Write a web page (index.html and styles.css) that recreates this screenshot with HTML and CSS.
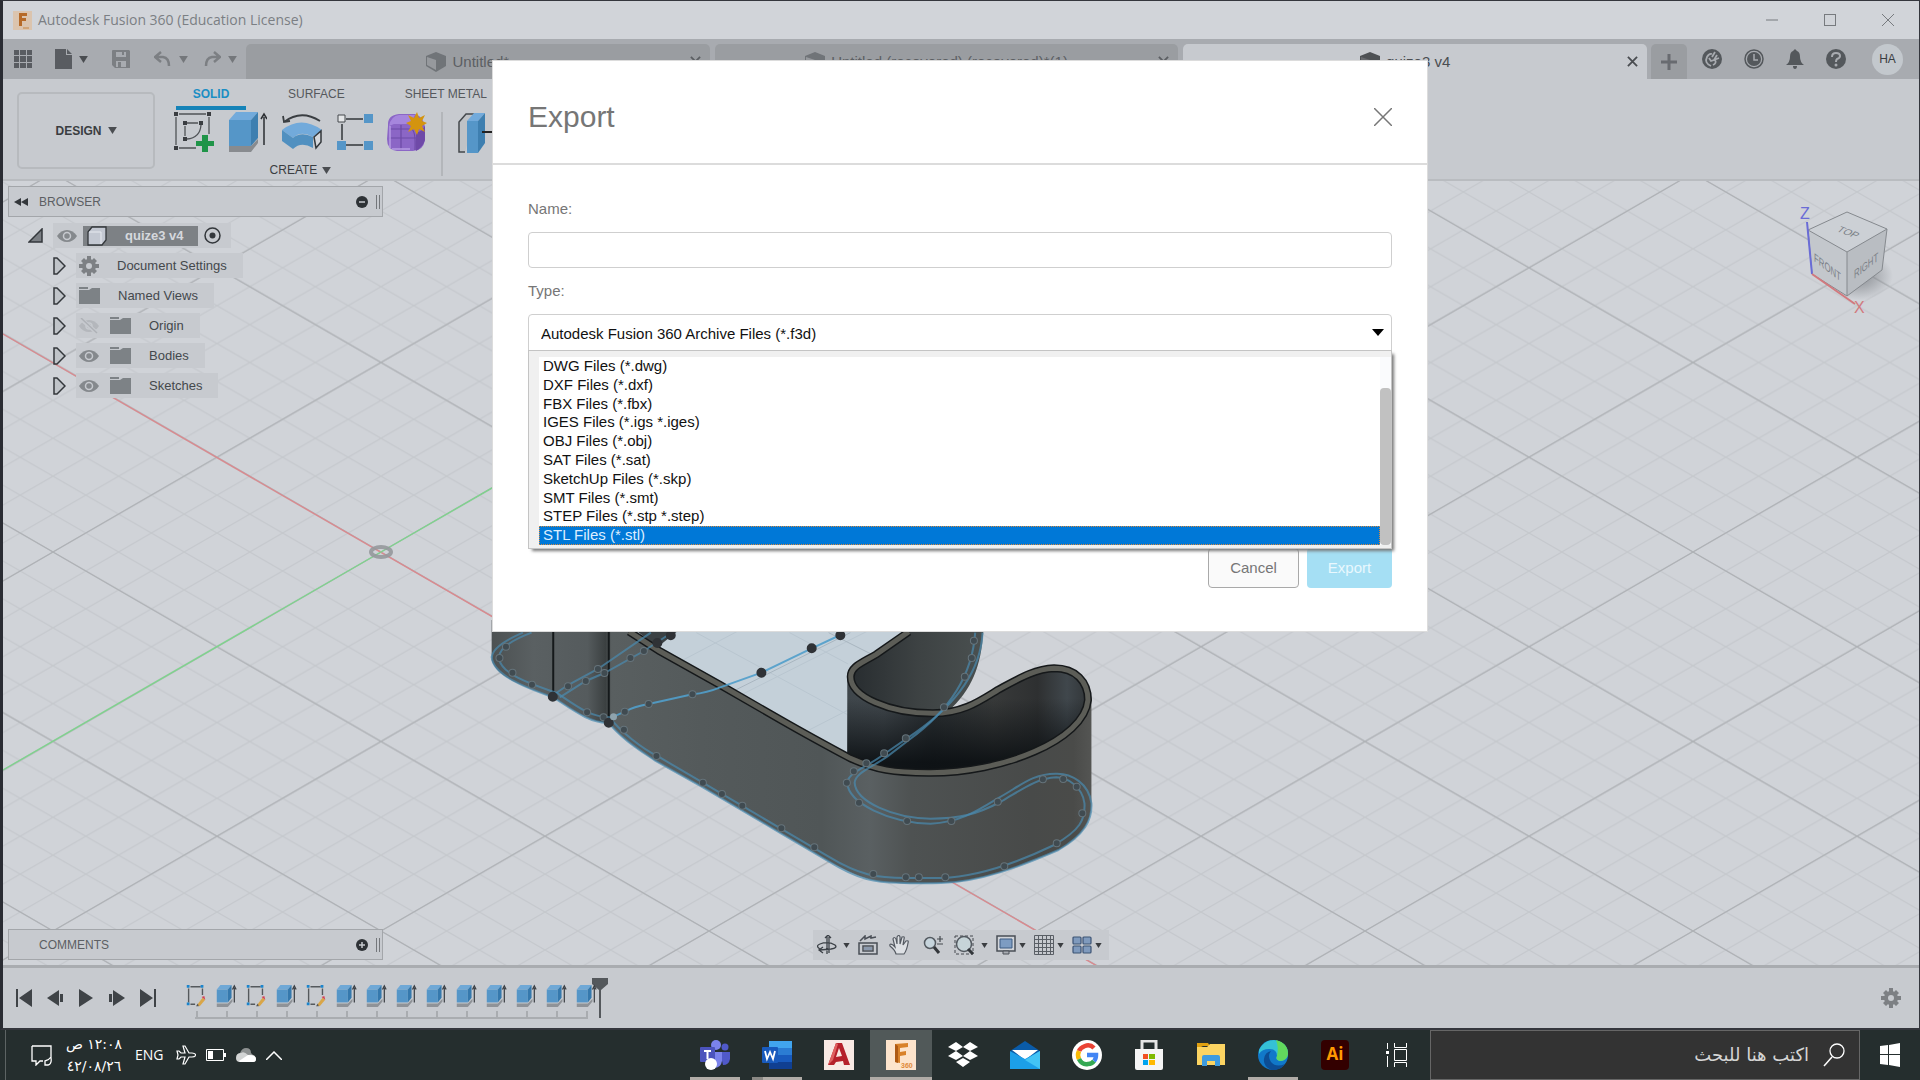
FILE: index.html
```html
<!DOCTYPE html>
<html lang="en">
<head>
<meta charset="utf-8">
<title>Autodesk Fusion 360 (Education License)</title>
<link rel="stylesheet" href="styles.css">
</head>
<body>
<svg class="defs" aria-hidden="true">
  <defs>
    <symbol id="i-caret" viewBox="0 0 10 8"><path d="M0 0H10L5 8Z" fill="currentColor"/></symbol>
    <symbol id="i-cube" viewBox="0 0 20 20"><path d="M0 4L10 0L20 4V14L10 20L0 14Z" fill="#707478"/><path d="M1 5L10 8V18L1 13Z" fill="#96999d"/></symbol>
    <symbol id="i-x" viewBox="0 0 12 12"><path d="M1 1L11 11M11 1L1 11" stroke="currentColor" stroke-width="2" fill="none"/></symbol>
    <symbol id="i-extrude" viewBox="0 0 22 26"><path d="M1 21H13L18 16V19L13 25H1Z" fill="#8f9398"/><path d="M1 6L5 1H17L13 6Z" fill="#6fa8d6"/><path d="M1 6H13V20H1Z" fill="#5596c8"/><path d="M13 6L17 1V15L13 20Z" fill="#3579ad"/><path d="M20 20V4M18 6L20 2L22 6" stroke="#3a3e42" stroke-width="1.300" fill="none"/></symbol>
    <symbol id="i-sketch" viewBox="0 0 22 26"><path d="M5 3H16M3 5V20M18 5V12M5 22H10" stroke="#55595d" stroke-width="1.500" fill="none"/><path d="M1 1H4V4H1ZM16 1H19V4H16ZM1 20H4V23H1Z" fill="#1c85cc"/><path d="M12 23L18 15L21 17L15 24Z" fill="#d9a648"/><path d="M17 14L20 13L21 17Z" fill="#d44456"/><path d="M11 24L13 21L14 24Z" fill="#555"/></symbol>
    <symbol id="i-gear" viewBox="0 0 20 20"><path d="M8 0H12V4H8ZM8 16H12V20H8ZM0 8H4V12H0ZM16 8H20V12H16ZM2 5L5 2L8 5L5 8ZM12 5L15 2L18 5L15 8ZM2 15L5 18L8 15L5 12ZM12 15L15 18L18 15L15 12Z" fill="#7d8084"/><circle cx="10" cy="10" r="5" fill="none" stroke="#7d8084" stroke-width="4"/></symbol>
    <symbol id="i-folder" viewBox="0 0 21 17"><path d="M0 0H9V2H0ZM0 3H10L13 1H21V17H0Z" fill="#7d8286"/></symbol>
    <symbol id="i-eye" viewBox="0 0 20 14"><path d="M0 7C5-1 15-1 20 7C15 15 5 15 0 7Z" fill="#85898d"/><circle cx="10" cy="7" r="3.500" fill="none" stroke="#c7cacf" stroke-width="1.500"/></symbol>
    <symbol id="i-closed-eye" viewBox="0 0 20 16"><path d="M0 8C5 0 15 0 20 8C15 16 5 16 0 8Z" fill="#b4b7bc"/><circle cx="10" cy="8" r="3" fill="none" stroke="#c7cacf" stroke-width="1.500"/><path d="M1 0L19 16" stroke="#c7cacf" stroke-width="4"/><path d="M2 0L18 15" stroke="#aeb1b6" stroke-width="1.500"/></symbol>
    <symbol id="i-expand" viewBox="0 0 13 18"><path d="M1 1H4L12 9L4 17H1Z" fill="#c0c4c9" stroke="#33373b" stroke-width="1.500"/></symbol>
  </defs>
</svg>

<main class="window">
  <header class="titlebar">
    <svg class="app-icon" viewBox="0 0 19 19"><rect width="19" height="19" fill="#dbc4ae"/><path d="M6 2H14V5H9V7H13V10H9V15H6Z" fill="#b66a28"/><path d="M10 16H16V18H10Z" fill="#d1a578"/></svg>
    <h1 class="title">Autodesk Fusion 360 (Education License)</h1>
    <div class="win-controls">
      <button aria-label="Minimize"><svg width="12" height="12" viewBox="0 0 12 12"><path d="M0 6H12" stroke="#777a7e"/></svg></button>
      <button aria-label="Maximize"><svg width="12" height="12" viewBox="0 0 12 12"><rect x=".5" y=".5" width="11" height="11" fill="none" stroke="#777a7e"/></svg></button>
      <button aria-label="Close"><svg width="12" height="12" viewBox="0 0 12 12"><path d="M0 0L12 12M12 0L0 12" stroke="#777a7e"/></svg></button>
    </div>
  </header>

  <nav class="tabbar">
    <div class="quick">
      <button aria-label="Data panel"><svg width="18" height="18" viewBox="0 0 18 18" fill="#595c61"><path d="M0 0H5V5H0ZM6 0H12V5H6ZM13 0H18V5H13ZM0 6H5V12H0ZM6 6H12V12H6ZM13 6H18V12H13ZM0 13H5V18H0ZM6 13H12V18H6ZM13 13H18V18H13Z"/></svg></button>
      <button class="file" aria-label="File"><svg width="17" height="20" viewBox="0 0 17 20"><path d="M0 0H11V6H17V20H0ZM12 0L17 5H12Z" fill="#595c61"/></svg><svg class="caret dark"><use href="#i-caret"/></svg></button>
      <button class="save" aria-label="Save"><svg width="18" height="18" viewBox="0 0 18 18"><path d="M0 1Q0 0 1 0H17L18 1V18H3L0 15Z" fill="#7c7f83"/><path d="M4 2H14V7H4ZM4 11H14V17H4Z" fill="#a8abb0"/><path d="M10 2H12V5H10ZM6 12H9V17H6Z" fill="#7c7f83"/></svg></button>
      <button class="undo" aria-label="Undo"><svg width="17" height="16" viewBox="0 0 17 16"><path d="M7 1L1 6L7 11M1 6H9Q15 7 15 15" fill="none" stroke="#7c7f83" stroke-width="2.500"/></svg><svg class="caret"><use href="#i-caret"/></svg></button>
      <button class="redo" aria-label="Redo"><svg width="17" height="16" viewBox="0 0 17 16"><path d="M10 1L16 6L10 11M16 6H8Q2 7 2 15" fill="none" stroke="#7c7f83" stroke-width="2.500"/></svg><svg class="caret"><use href="#i-caret"/></svg></button>
    </div>
    <div class="tabs">
      <div class="tab"><span class="tab-name"><svg class="cube"><use href="#i-cube"/></svg>Untitled*</span><button aria-label="Close tab"><svg class="x"><use href="#i-x"/></svg></button></div>
      <div class="tab"><span class="tab-name"><svg class="cube"><use href="#i-cube"/></svg>Untitled (recovered) (recovered)*(1)</span><button aria-label="Close tab"><svg class="x"><use href="#i-x"/></svg></button></div>
      <div class="tab active"><span class="tab-name"><svg class="cube"><use href="#i-cube"/></svg>quize3 v4</span><button aria-label="Close tab"><svg class="x"><use href="#i-x"/></svg></button></div>
    </div>
    <button class="new-tab" aria-label="New tab"><svg width="16" height="16" viewBox="0 0 16 16"><path d="M8 0V16M0 8H16" stroke="#686b70" stroke-width="3"/></svg></button>
    <div class="account">
      <button aria-label="Extensions"><svg width="20" height="20" viewBox="0 0 20 20"><circle cx="10" cy="10" r="10" fill="#54585c"/><path d="M9 17Q2 14 5 8Q7 4 10 5M7 9L9 12L12 11L15 6M10 8L13 3M12 11L17 9M13 11Q15 14 11 16" fill="none" stroke="#a8abb0" stroke-width="1.800"/></svg></button>
      <button aria-label="Job status"><svg width="20" height="20" viewBox="0 0 20 20"><circle cx="10" cy="10" r="9" fill="none" stroke="#54585c" stroke-width="1.500"/><circle cx="10" cy="10" r="7" fill="#54585c"/><path d="M10 5V11H14" fill="none" stroke="#a8abb0" stroke-width="1.500"/></svg></button>
      <button aria-label="Notifications"><svg width="18" height="20" viewBox="0 0 18 20"><path d="M9 0L11 2Q14 3 14 8Q14 13 18 16H0Q4 13 4 8Q4 3 7 2ZM7 17H11Q11 20 9 20Q7 20 7 17Z" fill="#54585c"/></svg></button>
      <button aria-label="Help"><svg width="20" height="20" viewBox="0 0 20 20"><circle cx="10" cy="10" r="10" fill="#54585c"/><path d="M6 8Q6 4 10 4Q14 4 14 7Q14 9 11 10Q10 11 10 13" fill="none" stroke="#a8abb0" stroke-width="2"/><circle cx="10" cy="16" r="1.500" fill="#a8abb0"/></svg></button>
      <button class="avatar">HA</button>
    </div>
  </nav>

  <section class="ribbon">
    <button class="workspace">DESIGN <svg class="caret dark"><use href="#i-caret"/></svg></button>
    <div class="tools">
      <div class="ribbon-tabs">
        <button class="selected">SOLID</button>
        <button>SURFACE</button>
        <button>SHEET METAL</button>
      </div>
      <div class="tool-groups">
        <div class="group">
          <div class="tool-icons">
            <svg width="40" height="40" viewBox="0 0 40 40"><path d="M5 2H32M2 5V33M35 5V22M5 36H22M13 11H24M11 14V24M27 13Q26 26 13 27" fill="none" stroke="#505357" stroke-width="1.300"/><path d="M0 0H4V4H0ZM33 0H37V4H33ZM0 34H4V38H0ZM9 9H13V13H9ZM25 9H29V13H25ZM9 25H13V29H9Z" fill="#3a3d41"/><path d="M28 23H34V29H40V34H34V40H28V34H22V29H28Z" fill="#1f9448"/></svg>
            <svg width="39" height="40" viewBox="0 0 39 40"><path d="M1 34H23L30 27V31L23 40H1Z" fill="#888b8f"/><path d="M1 8L8 0H30L23 8Z" fill="#72aadb"/><path d="M1 8H23V34H1Z" fill="#5596c8"/><path d="M23 8L30 0V26L23 34Z" fill="#3e7fb0"/><path d="M36 33V5M33 7L36 2L39 7" fill="none" stroke="#2b2e32" stroke-width="1.500"/></svg>
            <svg width="42" height="38" viewBox="0 0 42 38"><path d="M3 9Q20-4 39 8M2 3L3 9L9 8" fill="none" stroke="#3a3e42" stroke-width="1.800"/><path d="M1 17Q20 2 41 17L32 24Q20 17 12 25Z" fill="#72aadb"/><path d="M1 17L12 25V36L1 28ZM12 25Q20 18 32 24V35Q20 28 12 36Z" fill="#5190c0"/><path d="M33 24L40 18V29L35 35Z" fill="#d5d8dc" stroke="#33373b" stroke-width="1.500"/></svg>
            <svg width="36" height="36" viewBox="0 0 36 36"><path d="M9 5H26M5 10V26M9 31H26" stroke="#33373b" stroke-width="1.500"/><path d="M1 1H8V8H1Z" fill="#e4e6e8" stroke="#45494d"/><path d="M27 0H36V9H27ZM0 27H9V36H0ZM27 27H36V36H27Z" fill="#5596c8"/></svg>
            <svg width="40" height="40" viewBox="0 0 40 40"><path d="M1 14Q0 3 12 2H28Q37 5 38 16V28Q36 40 24 39H10Q0 38 0 27Z" fill="#8b66c6"/><path d="M2 14Q4 4 12 3H28L23 12H7Z" fill="#a686dd"/><path d="M29 21Q37 18 38 13V28Q36 35 29 39Z" fill="#6f4aa8"/><path d="M3 17H24Q29 18 28 38M14 13V38M2 26H29" fill="none" stroke="#6d4aa6" stroke-width="1.200"/><path d="M3 14V36M5 37H23" stroke="#b79ce4" stroke-width="1.500"/><path d="M30 0L32 6L38 3L35 9L40 11L35 14L38 20L32 17L30 23L27 17L21 20L24 14L19 11L24 9L21 3L27 6Z" fill="#d4940f"/></svg>
          </div>
          <button class="group-name">CREATE <svg class="caret dark"><use href="#i-caret"/></svg></button>
        </div>
        <div class="group next">
          <svg width="42" height="40" viewBox="0 0 42 40"><path d="M7 39H1V9L8 1H18" fill="#bfc2c6" stroke="#44484c" stroke-width="1.500"/><path d="M9 8L16 0H27L20 8Z" fill="#72aadb"/><path d="M9 8H20V40H9Z" fill="#5596c8"/><path d="M20 8L27 0V30L20 40Z" fill="#3e7fb0"/><path d="M24 19H40" stroke="#222" stroke-width="2"/></svg>
        </div>
      </div>
    </div>
  </section>

  <section class="viewport">
    <svg class="scene" aria-hidden="true">
      <defs>
        <pattern id="minor" x="378" y="371" width="65.6" height="37.9" patternUnits="userSpaceOnUse"><path d="M-65.600-37.900L131.200 75.800M-65.600 75.800L131.200-37.900" stroke="#c5c8cd" stroke-width="1.200"/></pattern>
        <pattern id="major" x="378" y="371" width="328" height="189.5" patternUnits="userSpaceOnUse"><path d="M-328-189.500L656 379M-328 379L656-189.500" stroke="#aeb1b5" stroke-width="1.200"/></pattern>
        <linearGradient id="wall" gradientUnits="userSpaceOnUse" x1="73" y1="0" x2="1456" y2="0"><stop offset="0" stop-color="#4c5152"/><stop offset=".07" stop-color="#5a6062"/><stop offset=".16" stop-color="#555b5d"/><stop offset=".19" stop-color="#3b4041"/><stop offset=".2" stop-color="#595f60"/><stop offset=".35" stop-color="#545a5b"/><stop offset=".55" stop-color="#505657"/><stop offset=".63" stop-color="#5a6062"/><stop offset=".7" stop-color="#4e5252"/><stop offset=".9" stop-color="#484a49"/><stop offset=".97" stop-color="#4a4b49"/><stop offset="1" stop-color="#545553"/></linearGradient>
        <linearGradient id="inner" x1="0" y1="0" x2="1" y2="0"><stop offset="0" stop-color="#3f464b"/><stop offset=".15" stop-color="#42494e"/><stop offset=".35" stop-color="#2b3033"/><stop offset=".6" stop-color="#383a3a"/><stop offset=".78" stop-color="#2e3031"/><stop offset=".9" stop-color="#40474c"/><stop offset="1" stop-color="#2f3335"/></linearGradient>
        <linearGradient id="fade" x1="0" y1="0" x2="0" y2="1"><stop offset=".3" stop-color="#0b0f12" stop-opacity="0"/><stop offset=".9" stop-color="#0b0f12" stop-opacity=".9"/></linearGradient>
        <linearGradient id="far" x1="0" y1="0" x2="1" y2="0"><stop offset="0" stop-color="#282d30"/><stop offset=".5" stop-color="#3d4243"/><stop offset="1" stop-color="#4a5050"/></linearGradient>
        <radialGradient id="shade"><stop offset="0" stop-color="#777b80" stop-opacity=".8"/><stop offset="1" stop-color="#777b80" stop-opacity="0"/></radialGradient>
      </defs>
      <rect width="100%" height="100%" fill="url(#minor)"/>
      <rect width="100%" height="100%" fill="url(#major)"/>
      <path d="M0 153L1378 949" stroke="#d98a8f" stroke-width="1.400"/>
      <path d="M0 589L378 371L600 243" stroke="#7fd38d" stroke-width="1.400"/>
      <ellipse cx="378" cy="371" rx="10" ry="5" fill="none" stroke="#95989c" stroke-width="4" stroke-opacity=".9"/>

      <svg class="body" x="457" y="419" width="680" height="300" viewBox="0 0 1568 900" preserveAspectRatio="none">
        <path d="M380 80H1060L960 170L895 230V475L740 365L600 255Z" fill="#c4d0d9"/>
        <path d="M545 98L895 345M760 98L895 192M640 290L960 80M500 190L660 80M790 400L895 330" stroke="#b9c6d0" stroke-width="1"/>
        <path d="M620 280L900 98M850 98L960 170" stroke="#a9b6c0" stroke-width="1"/>
        <path d="M1040 90H1207C1202 200 1180 270 1125 335L1090 342C980 340 905 280 905 230C905 190 960 180 1040 90Z" fill="url(#far)"/>
        <path d="M893 230C900 295 990 345 1090 345C1160 345 1210 295 1260 255C1310 215 1340 200 1375 200C1430 202 1456 250 1456 300C1450 420 1250 525 1080 518C1000 520 940 500 893 468Z" fill="url(#inner)"/>
        <path d="M893 230C900 295 990 345 1090 345C1160 345 1210 295 1260 255C1310 215 1340 200 1375 200C1430 202 1456 250 1456 300C1450 420 1250 525 1080 518C1000 520 940 500 893 468Z" fill="url(#fade)"/>
        <path d="M73 60V180C85 235 155 262 215 292C255 325 300 370 343 368C370 415 420 455 450 482L560 562L740 700L850 784C920 835 960 848 1000 848C1040 852 1080 850 1110 849C1200 846 1290 800 1380 750C1440 705 1458 660 1456 600V290C1450 430 1250 525 1080 521C1000 520 960 515 895 475C850 450 780 390 740 362L600 262L460 160L350 60Z" fill="url(#wall)"/>
        <path d="M405 90L500 95L455 142Z" fill="#3b4144"/>
        <g class="rim">
          <path d="M390 95L460 153L600 255L740 360C800 405 850 440 900 475C960 510 1000 518 1080 518C1250 520 1440 420 1448 300C1448 245 1420 205 1370 205C1325 207 1290 235 1240 270C1200 302 1160 340 1090 340C990 340 901 290 901 230C901 200 925 190 960 163L1035 95"/>
          <path class="rim-top" d="M390 95L460 153L600 255L740 360C800 405 850 440 900 475C960 510 1000 518 1080 518C1250 520 1440 420 1448 300C1448 245 1420 205 1370 205C1325 207 1290 235 1240 270C1200 302 1160 340 1090 340C990 340 901 290 901 230C901 200 925 190 960 163L1035 95"/>
        </g>
        <path class="edge" d="M215 90V292M343 90V368"/>
        <g class="sketch">
          <path d="M73 170C75 225 150 262 215 292C255 325 300 372 343 368C370 415 420 455 450 482L560 562L740 700L850 784C920 840 960 848 1010 848C1040 850 1080 850 1110 849C1200 846 1290 800 1380 750C1440 705 1458 660 1456 610C1450 550 1410 520 1375 521C1320 520 1290 560 1240 595C1190 635 1150 668 1085 671C990 668 895 610 893 548C896 515 940 500 975 465L1050 398C1130 325 1200 230 1205 98"/>
          <path d="M165 98C110 125 88 150 90 175C95 225 170 255 225 280C270 320 300 350 345 352C370 395 420 445 455 468L560 548L740 686L850 770C920 825 960 834 1030 834H1110C1200 830 1290 785 1370 735C1430 690 1442 660 1440 610C1435 560 1400 532 1375 532C1330 535 1300 565 1250 603C1190 645 1150 656 1085 656C1000 655 912 605 910 548C912 520 945 505 985 470L1035 420C1110 350 1180 250 1188 98"/>
          <path d="M145 98C105 120 75 145 73 172M215 285L249 255L318 207L440 98M230 292L290 243L333 219L424 153L480 105"/>
          <path class="bright" d="M350 352L380 335Q400 320 435 312L536 283Q570 278 600 262L695 218L811 145L877 105"/>
        </g>
        <path class="dots halo" d="M106 140h0M91 174h0M121 218h0M166 254h0M249 259h0M290 243h0M333 219h0M318 207h0M393 174h0M424 153h0M293 337h0M331 352h0M380 335h0M435 312h0M536 283h0M378 389h0M453 468h0M560 548h0M604 582h0M651 617h0M741 685h0M817 742h0M953 822h0M1028 832h0M1058 832h0M1119 832h0M1255 799h0M1376 730h0M1435 640h0M1422 560h0M1391 537h0M1344 538h0M1240 605h0M1133 663h0M1031 663h0M920 608h0M892 548h0M908 514h0M937 490h0M978 460h0M1028 415h0M1116 322h0M1164 230h0M1180 174h0M1185 122h0"/>
        <path class="dots" d="M106 140h0M91 174h0M121 218h0M166 254h0M249 259h0M290 243h0M333 219h0M318 207h0M393 174h0M424 153h0M293 337h0M331 352h0M380 335h0M435 312h0M536 283h0M378 389h0M453 468h0M560 548h0M604 582h0M651 617h0M741 685h0M817 742h0M953 822h0M1028 832h0M1058 832h0M1119 832h0M1255 799h0M1376 730h0M1435 640h0M1422 560h0M1391 537h0M1344 538h0M1240 605h0M1133 663h0M1031 663h0M920 608h0M892 548h0M908 514h0M937 490h0M978 460h0M1028 415h0M1116 322h0M1164 230h0M1180 174h0M1185 122h0"/>
        <path class="dots strong" d="M214 290h0M343 368h0M455 129h0M486 106h0M695 218h0M811 145h0M877 106h0"/>
        <path class="dots pale" d="M354 350h0"/>
      </svg>

      <g class="viewcube">
        <ellipse cx="1856" cy="95" rx="34" ry="24" fill="url(#shade)"/>
        <path d="M1805 49L1844 31L1884 48L1844 71Z" fill="#ccd0d5"/><path d="M1805 49L1844 71V115L1809 93Z" fill="#c3c7cc"/><path d="M1884 48L1844 71V115L1879 89Z" fill="#b9bdc2"/>
        <path d="M1805 49L1844 31L1884 48L1844 71ZL1809 93L1844 115L1879 89L1884 48M1844 71V115" fill="none" stroke="#85898e"/>
        <path d="M1804 41L1809 93" stroke="#6a6cd6" stroke-width="2"/><path d="M1809 93L1852 123" stroke="#d2797e" stroke-width="2"/>
        <text x="1797" y="38" fill="#6a6cd6">Z</text><text x="1851" y="132" fill="#d2797e">X</text>
        <text class="face" transform="matrix(.8 .3 -.6 .6 1833 50)">TOP</text>
        <text class="face" transform="matrix(.65 .5 0 1 1811 80)">FRONT</text>
        <text class="face" transform="matrix(.65 -.5 0 1 1851 98)">RIGHT</text>
      </g>
    </svg>

    <aside class="browser">
      <header class="panel-head"><svg width="14" height="8" viewBox="0 0 14 8"><path d="M7 0V8L0 4ZM14 0V8L7 4Z" fill="#33373b"/></svg><h2>BROWSER</h2><button aria-label="Collapse browser"><svg width="12" height="12" viewBox="0 0 12 12"><circle cx="6" cy="6" r="6" fill="#2e3236"/><path d="M3 6H9" stroke="#c7cacf" stroke-width="1.500"/></svg></button><i class="grip"></i></header>
      <ul class="tree">
        <li class="root"><svg width="15" height="15" viewBox="0 0 15 15"><path d="M1 14H14V1Z" fill="#7b7f84" stroke="#33373b" stroke-width="1.500"/></svg><span class="node"><svg class="eye"><use href="#i-eye"/></svg><b class="component"><svg width="20" height="20" viewBox="0 0 20 20"><path d="M1 6L5 1H19V14L15 19H1Z" fill="#c3c8d2" stroke="#33373b" stroke-width="1.300"/><path d="M2 6H14V18" fill="none" stroke="#e7eaf0"/></svg>quize3 v4</b><svg width="17" height="17" viewBox="0 0 17 17"><circle cx="8.500" cy="8.500" r="7.500" fill="none" stroke="#33373b" stroke-width="1.500"/><circle cx="8.500" cy="8.500" r="3" fill="#33373b"/></svg></span></li>
        <li><svg class="expand"><use href="#i-expand"/></svg><span class="node"><svg class="gear"><use href="#i-gear"/></svg><span class="label">Document Settings</span></span></li>
        <li><svg class="expand"><use href="#i-expand"/></svg><span class="node"><svg class="folder"><use href="#i-folder"/></svg><span class="label">Named Views</span></span></li>
        <li><svg class="expand"><use href="#i-expand"/></svg><span class="node"><svg class="eye"><use href="#i-closed-eye"/></svg><svg class="folder"><use href="#i-folder"/></svg><span class="label">Origin</span></span></li>
        <li><svg class="expand"><use href="#i-expand"/></svg><span class="node"><svg class="eye"><use href="#i-eye"/></svg><svg class="folder"><use href="#i-folder"/></svg><span class="label">Bodies</span></span></li>
        <li><svg class="expand"><use href="#i-expand"/></svg><span class="node"><svg class="eye"><use href="#i-eye"/></svg><svg class="folder"><use href="#i-folder"/></svg><span class="label">Sketches</span></span></li>
      </ul>
    </aside>

    <header class="panel-head comments"><h2>COMMENTS</h2><button aria-label="Add comment"><svg width="12" height="12" viewBox="0 0 12 12"><circle cx="6" cy="6" r="6" fill="#2e3236"/><path d="M3 6H9M6 3V9" stroke="#c7cacf" stroke-width="1.500"/></svg></button><i class="grip"></i></header>

    <div class="navbar" role="toolbar" aria-label="Navigation">
      <button class="wide" aria-label="Orbit"><svg width="20" height="20" viewBox="0 0 20 20"><path d="M10 1V19M12 2V18M8 3L11 0L14 3M3 14Q-2 11 3 9Q11 6 18 10Q21 13 14 14L3 15M6 12L2 15L6 18" fill="none" stroke="#3c4147" stroke-width="1.300"/></svg><svg class="caret small"><use href="#i-caret"/></svg></button>
      <button aria-label="Look at"><svg width="20" height="20" viewBox="0 0 20 20"><path d="M1 8H19V19H1ZM5 11H15V16H5ZM2 6L7 1V4L13 1V3L18 2" fill="none" stroke="#4a4f57" stroke-width="1.500"/><path d="M6 12H14V15H6Z" fill="#8b99ad"/></svg></button>
      <button class="plain" aria-label="Pan"><svg width="20" height="20" viewBox="0 0 20 20"><path d="M7 19Q6 15 1 11Q0 8 4 10L6 12L4 4Q5 1 7 4L8 9V2Q10-1 11 2V9L13 2Q16 1 15 4L14 10L17 6Q20 5 19 8Q18 15 15 19Z" fill="#dde0e4" stroke="#555a62" stroke-width="1.200"/></svg></button>
      <button class="plain" aria-label="Zoom"><svg width="20" height="20" viewBox="0 0 20 20"><circle cx="7" cy="8" r="5.500" fill="#c6d4dc" stroke="#535960" stroke-width="1.500"/><path d="M11 12L16 18" stroke="#33373b" stroke-width="3"/><path d="M14 4H20M17 1V7M14 9H20" stroke="#44494f" stroke-width="1.200"/></svg></button>
      <button class="wide" aria-label="Fit"><svg width="21" height="20" viewBox="0 0 21 20"><path d="M1 1H19V19H1Z" fill="none" stroke="#44494f" stroke-dasharray="3 2"/><circle cx="10" cy="9" r="7.500" fill="#c6d4d8" stroke="#535960" stroke-width="1.500"/><path d="M14 14L19 19" stroke="#33373b" stroke-width="3"/></svg><svg class="caret small"><use href="#i-caret"/></svg></button>
      <button aria-label="Display settings"><svg width="20" height="20" viewBox="0 0 20 20"><path d="M1 1H19V16H1Z" fill="#d1d4d9" stroke="#4a4f57" stroke-width="1.500"/><path d="M4 4H16V13H4Z" fill="#7d9cc2" stroke="#3f5d83"/><path d="M7 16H13V19H7Z" fill="#a9adb3" stroke="#4a4f57"/></svg><svg class="caret small"><use href="#i-caret"/></svg></button>
      <button aria-label="Grid and snaps"><svg width="20" height="20" viewBox="0 0 20 20"><path d="M.5 .5H19.500V19.500H.5ZM4.500 0V20M8.500 0V20M12.500 0V20M16.500 0V20M0 4.500H20M0 8.500H20M0 12.500H20M0 16.500H20" fill="none" stroke="#5a5f66"/></svg><svg class="caret small"><use href="#i-caret"/></svg></button>
      <button aria-label="Viewports"><svg width="20" height="18" viewBox="0 0 20 18"><g fill="#7f9abd" stroke="#3d5475" stroke-width="1.200"><rect x="1" y="1" width="8" height="7" rx="1"/><rect x="11" y="1" width="8" height="7" rx="1"/><rect x="1" y="10" width="8" height="7" rx="1"/><rect x="11" y="10" width="8" height="7" rx="1"/></g></svg><svg class="caret small"><use href="#i-caret"/></svg></button>
    </div>
  </section>

  <footer class="timeline">
    <div class="playback">
      <button aria-label="To start"><svg width="16" height="18" viewBox="0 0 16 18"><path d="M0 0H2V18H0ZM16 0V18L3 9Z"/></svg></button>
      <button aria-label="Step back"><svg width="16" height="18" viewBox="0 0 16 18"><path d="M12 1V17L0 9ZM13 5H16V13H13Z"/></svg></button>
      <button aria-label="Play"><svg width="16" height="18" viewBox="0 0 16 18"><path d="M1 0L15 9L1 18Z"/></svg></button>
      <button aria-label="Step forward"><svg width="16" height="18" viewBox="0 0 16 18"><path d="M4 1V17L16 9ZM0 5H3V13H0Z"/></svg></button>
      <button aria-label="To end"><svg width="16" height="18" viewBox="0 0 16 18"><path d="M14 0H16V18H14ZM0 0V18L13 9Z"/></svg></button>
    </div>
    <ol class="features">
      <li><svg><use href="#i-sketch"/></svg></li><li><svg><use href="#i-extrude"/></svg></li><li><svg><use href="#i-sketch"/></svg></li><li><svg><use href="#i-extrude"/></svg></li><li><svg><use href="#i-sketch"/></svg></li><li><svg><use href="#i-extrude"/></svg></li><li><svg><use href="#i-extrude"/></svg></li><li><svg><use href="#i-extrude"/></svg></li><li><svg><use href="#i-extrude"/></svg></li><li><svg><use href="#i-extrude"/></svg></li><li><svg><use href="#i-extrude"/></svg></li><li><svg><use href="#i-extrude"/></svg></li><li><svg><use href="#i-extrude"/></svg></li><li><svg><use href="#i-extrude"/></svg></li>
    </ol>
    <svg class="marker" width="16" height="40" viewBox="0 0 16 40"><path d="M0 0H16V6L9 12V40H7V12L0 6Z" fill="#54585c"/></svg>
    <button class="settings" aria-label="Timeline settings"><svg class="gear"><use href="#i-gear"/></svg></button>
  </footer>
</main>

<div class="overlay">
  <section class="dialog" role="dialog" aria-labelledby="dialog-title">
    <header class="dialog-head">
      <h2 id="dialog-title">Export</h2>
      <button aria-label="Close dialog"><svg width="18" height="18" viewBox="0 0 18 18"><path d="M0 0L18 18M18 0L0 18" stroke="#777" stroke-width="1.500"/></svg></button>
    </header>
    <form class="fields">
      <label for="name">Name:</label>
      <input id="name" type="text">
      <label for="type">Type:</label>
      <div class="combo">
        <select id="type"><option>Autodesk Fusion 360 Archive Files (*.f3d)</option></select>
        <svg class="combo-arrow" viewBox="0 0 12 7"><path d="M0 0H12L6 7Z"/></svg>
        <div class="popup">
          <ul class="options" role="listbox" aria-label="File type">
            <li role="option">DWG Files (*.dwg)</li>
            <li role="option">DXF Files (*.dxf)</li>
            <li role="option">FBX Files (*.fbx)</li>
            <li role="option">IGES Files (*.igs *.iges)</li>
            <li role="option">OBJ Files (*.obj)</li>
            <li role="option">SAT Files (*.sat)</li>
            <li role="option">SketchUp Files (*.skp)</li>
            <li role="option">SMT Files (*.smt)</li>
            <li role="option">STEP Files (*.stp *.step)</li>
            <li role="option" class="current" aria-selected="true">STL Files (*.stl)</li>
          </ul>
          <div class="scroll"><i></i></div>
        </div>
      </div>
      <div class="actions">
        <button type="button" class="cancel">Cancel</button>
        <button type="button" class="export" disabled>Export</button>
      </div>
    </form>
  </section>
</div>

<footer class="taskbar">
  <div class="tray">
    <svg width="22" height="22" viewBox="0 0 22 22"><path d="M1 2H20V14M1 2V17H5V21L9 17H12M20 13Q18 16 14 17V21H17Q21 20 20 14" fill="none" stroke="#fff" stroke-width="1.300"/></svg>
    <div class="clock" dir="rtl"><span>١٢:٠٨ ص</span><span>٤٢/٠٨/٢٦</span></div>
    <span class="lang">ENG</span>
    <svg width="20" height="20" viewBox="0 0 20 20"><path d="M20 10Q19 8 16 8H13L9 1H7L9 8H5L3 6H1L2 10L1 14H3L5 12H9L7 19H9L13 12H16Q19 12 20 10Z" fill="none" stroke="#fff" stroke-width="1.200"/></svg>
    <svg width="20" height="12" viewBox="0 0 20 12"><path d="M.5 .5H17.500V11.500H.5Z" fill="none" stroke="#fff"/><path d="M2 2H7V10H2ZM18 4H20V8H18Z" fill="#fff"/></svg>
    <svg width="20" height="14" viewBox="0 0 20 14"><path d="M4 5Q6 0 10 0Q15 0 15 5L19 9H2Z" fill="#8d9191"/><path d="M0 10Q0 5 5 5Q8 3 12 7Q20 6 20 11Q20 14 17 14H4Q0 14 0 10Z" fill="#d2d4d4"/><path d="M3 13L12 7Q20 7 20 11Q20 14 17 14H4Z" fill="#fff"/></svg>
    <svg width="16" height="9" viewBox="0 0 16 9"><path d="M0 9L8 1L16 9" fill="none" stroke="#fff" stroke-width="1.500"/></svg>
  </div>
  <div class="apps">
    <button class="run" aria-label="Teams"><svg viewBox="0 0 30 30"><circle cx="16" cy="5" r="5" fill="#7b83eb"/><circle cx="25" cy="7" r="3.500" fill="#5059c9"/><path d="M20 12H30V19Q29 25 23 25Z" fill="#5059c9"/><path d="M9 12H22V21Q21 28 14 28Q9 27 9 22Z" fill="#7b83eb"/><rect y="7" width="15" height="15" rx="1" fill="#4b53bc"/><path d="M4 11H11M7.500 11V19" stroke="#fff" stroke-width="2"/><circle cx="11" cy="24" r="6" fill="#fff"/></svg></button>
    <button class="run two" aria-label="Word"><svg viewBox="0 0 30 30"><path d="M7 1H30V8H7Z" fill="#41a5ee"/><path d="M7 8H30V15H7Z" fill="#2b7cd3"/><path d="M7 15H30V22H7Z" fill="#185abd"/><path d="M7 22H30V29H7Z" fill="#103f91"/><rect y="7" width="16" height="16" rx="1" fill="#185abd"/><path d="M3 11L5 19L8 12L11 19L13 11" fill="none" stroke="#fff" stroke-width="1.800"/></svg></button>
    <button aria-label="AutoCAD"><svg viewBox="0 0 30 30"><path d="M0 0H30V30H0Z" fill="#f8e9e4"/><path d="M4 25L12 3H18L26 25H20L19 21L12 22L10 25ZM15 8L12 17L18 16Z" fill="#b5202b"/><path d="M4 25L12 3L14 4L9 20Z" fill="#df6060"/></svg></button>
    <button class="run focus" aria-label="Fusion 360"><svg viewBox="0 0 30 30"><path d="M0 0H30V30H0Z" fill="#fde4cc"/><path d="M9 4L22 3V7L14 8V12L20 11V15L14 16V23L9 22Z" fill="#d9822a"/><path d="M9 4L12 6V23L9 22Z" fill="#ae5913"/><text x="15" y="28" class="tiny">360</text></svg></button>
    <button aria-label="Dropbox"><svg viewBox="0 0 30 30"><path d="M8 2L15 7L8 11L0 7ZM22 2L30 7L22 11L15 7ZM8 11L15 16L8 20L0 16ZM22 11L30 16L22 20L15 16ZM15 18L22 22L15 27L8 22Z" fill="#fff"/></svg></button>
    <button aria-label="Mail"><svg viewBox="0 0 30 30"><path d="M0 11L15 1L30 11L15 22Z" fill="#0a5ba8"/><path d="M2 10H28L15 20Z" fill="#fff"/><path d="M0 11L15 19L30 11V29H0Z" fill="#1c9fe8"/><path d="M30 11L15 20L30 29Z" fill="#43c4f5"/></svg></button>
    <button aria-label="Google"><svg viewBox="0 0 30 30"><circle cx="15" cy="15" r="15" fill="#fff"/><g fill="none" stroke-width="4.500"><path d="M22 8Q18 4 13 6Q8 8 7 11" stroke="#ea4335"/><path d="M7 11Q5 15 7 19" stroke="#fbbc05"/><path d="M7 19Q10 25 16 24Q20 24 22 21" stroke="#34a853"/><path d="M22 21Q24 19 24 15H15" stroke="#4285f4"/></g></svg></button>
    <button aria-label="Store"><svg viewBox="0 0 30 30"><path d="M8 10V1H22V10" fill="none" stroke="#e6e6e6" stroke-width="3"/><path d="M1 9H29V28Q29 30 27 30H3Q1 30 1 28Z" fill="#f5f5f5"/><path d="M9 14H14V19H9Z" fill="#f25022"/><path d="M15 14H21V19H15Z" fill="#7fba00"/><path d="M9 20H14V25H9Z" fill="#00a4ef"/><path d="M15 20H21V25H15Z" fill="#ffb900"/></svg></button>
    <button aria-label="File Explorer"><svg viewBox="0 0 30 30"><path d="M1 3H12L14 6H7L1 9Z" fill="#e0a010"/><path d="M1 7H11L14 4H29V25H1Z" fill="#fcd462"/><path d="M6 26V17Q6 15 8 15H22Q24 15 24 17V26H19V21H11V26Z" fill="#3e9bdf"/></svg></button>
    <button class="run" aria-label="Edge"><svg viewBox="0 0 30 30"><circle cx="15" cy="15" r="15" fill="#1178c9"/><path d="M1 10Q6 0 16 0Q30 2 30 14Q29 21 22 21Q17 20 19 16Q19 9 11 9Q4 9 1 14Z" fill="#35c1d6"/><path d="M18 0Q30 3 30 14Q29 21 22 21Q17 20 19 16Q21 8 18 0Z" fill="#62d95d"/><path d="M13 11Q9 16 13 22Q18 28 27 24Q22 31 13 30Q5 26 6 19Q7 12 13 11Z" fill="#0c4d95"/></svg></button>
    <button aria-label="Illustrator"><span class="ai">Ai</span></button>
    <button aria-label="Task view"><svg class="taskview" viewBox="0 0 22 24"><path d="M1.500 0V6M1.500 13V24M8.500 0V4.500H20.500V0M8.500 6.500H20.500V17.500H8.500ZM8.500 24V19.500H20.500V24" fill="none" stroke="#fff"/><path d="M0 8H3V11H0Z" fill="#fff"/></svg></button>
  </div>
  <label class="search" dir="rtl">
    <svg width="22" height="24" viewBox="0 0 22 24"><circle cx="14" cy="8" r="7" fill="none" stroke="#fff" stroke-width="1.300"/><path d="M9 14L1 23" stroke="#fff" stroke-width="1.500"/></svg>
    <input type="text" placeholder="اكتب هنا للبحث" aria-label="اكتب هنا للبحث">
  </label>
  <button class="start" aria-label="Start"><svg width="20" height="24" viewBox="0 0 20 24"><path d="M0 3L8 2V11H0ZM9 2L20 0V11H9ZM0 12H8V22L0 21ZM9 12H20V24L9 22Z" fill="#fff"/></svg></button>
</footer>
</body>
</html>
```
FILE: styles.css
```css
* { box-sizing: border-box; }

body {
  margin: 0;
  height: 100vh;
  display: flex;
  flex-direction: column;
  overflow: hidden;
  background: #14181a;
  color: #3a3d41;
  font: 12px/16px "Liberation Sans", Arial, sans-serif;
}

h1, h2, ul, ol { margin: 0; padding: 0; font-size: inherit; font-weight: normal; list-style: none; }
button { display: flex; align-items: center; padding: 0; border: 0; background: none; color: inherit; font: inherit; }
svg { flex: none; display: block; }
.defs { position: absolute; width: 0; height: 0; }

.window {
  flex: 1;
  min-height: 0;
  display: flex;
  flex-direction: column;
  border: 1px solid #34363d;
  border-left: 3px solid #2a2c33;
  border-bottom-width: 2px;
  background: #c7cacf;
}

/* Title bar */
.titlebar { display: flex; align-items: center; height: 38px; padding: 0 2px 0 10px; background: #d1d4d9; }
.app-icon { width: 19px; height: 19px; }
.title { flex: 1; margin-left: 6px; color: #7b7f84; font: 14px/20px "Open Sans", "Noto Sans", sans-serif; }
.win-controls { display: flex; }
.win-controls button { width: 58px; height: 38px; justify-content: center; }

/* Document tabs */
.tabbar { display: flex; height: 40px; background: #a8abb0; }
.quick { display: flex; align-items: center; width: 243px; padding-left: 11px; }
.file { margin-left: 23px; gap: 7px; }
.save { margin-left: 24px; }
.undo { margin-left: 24px; gap: 8px; }
.redo { margin-left: 16px; gap: 7px; }
.caret { width: 9px; height: 7px; color: #74777b; }
.caret.dark { color: #4a4d51; }
.caret.small { width: 7px; height: 5px; color: #3a3d41; }
.tabs { flex: 1; display: flex; gap: 5px; padding-top: 5px; }
.tab { flex: 1; display: flex; align-items: center; padding-right: 9px; border-radius: 5px 5px 0 0; background: #9a9da1; color: #5c5f63; font-size: 15px; }
.tab-name { flex: 1; display: flex; align-items: center; justify-content: center; gap: 6px; }
.tab.active { background: #c7cacf; color: #4a4d51; }
.cube { width: 20px; height: 20px; }
.active .cube { filter: brightness(.7); }
.x { width: 11px; height: 11px; }
.new-tab { width: 36px; margin: 5px 0 0 4px; justify-content: center; border-radius: 5px 5px 0 0; background: #9a9da1; }
.account { display: flex; align-items: center; gap: 22px; width: 232px; padding-left: 15px; }
.avatar { width: 31px; height: 31px; margin-left: 4px; justify-content: center; border-radius: 50%; background: #c3c8cd; }

/* Ribbon */
.ribbon { display: flex; height: 102px; padding-left: 14px; border-bottom: 2px solid #b9bcc0; background: #c7cacf; }
.workspace { width: 138px; height: 77px; margin-top: 13px; justify-content: center; gap: 6px; border: 2px solid #b7babe; border-radius: 5px; font-weight: bold; }
.tools { margin-left: 19px; }
.ribbon-tabs { display: flex; height: 31px; gap: 38px; padding: 4px 0 0 2px; }
.ribbon-tabs button { height: 27px; padding: 0 4px 6px; color: #55585c; }
.ribbon-tabs .selected { width: 70px; justify-content: center; border-bottom: 4px solid #1583b8; padding-bottom: 2px; color: #1a8ec4; font-weight: bold; }
.ribbon-tabs button + button + button { margin-left: 14px; }
.tool-groups { display: flex; padding-top: 2px; }
.group { display: flex; flex-direction: column; align-items: center; height: 64px; }
.tool-icons { display: flex; align-items: center; height: 42px; gap: 14px; padding-right: 14px; }
.group-name { height: 28px; gap: 5px; padding: 10px 14px 0 0; }
.next { padding: 1px 0 0 15px; border-left: 2px solid #b3b6ba; }

/* Model view */
.viewport { position: relative; flex: 1; min-height: 0; overflow: hidden; background: #d0d3d8; }
.scene { position: absolute; inset: 0; width: 100%; height: 100%; }
.body path { vector-effect: non-scaling-stroke; }
.rim path { fill: none; stroke: #15181a; stroke-width: 8px; }
.rim .rim-top { stroke: #5c5d57; stroke-width: 5px; }
.edge { stroke: #15191b; stroke-width: 2px; }
.sketch path { fill: none; stroke: #4a8bb0; stroke-width: 2px; opacity: .7; }
.sketch .bright { stroke: #519fcb; opacity: .9; }
.body .dots { stroke: #404b51; stroke-width: 6px; stroke-linecap: round; }
.body .halo { stroke: #65737a; stroke-width: 8px; }
.body .strong { stroke: #2f3236; stroke-width: 10px; }
.body .pale { stroke: #8fa3ad; stroke-width: 7px; }
.viewcube text { font-size: 16px; }
.viewcube .face { fill: #7b8087; font-size: 12px; }

.browser { position: relative; width: 375px; margin: 5px 0 0 5px; }
.panel-head { display: flex; align-items: center; width: 375px; height: 31px; padding: 0 2px 0 5px; border: 1px solid #a3a6aa; background: #c7cacf; color: #5c5f63; }
.panel-head h2 { flex: 1; margin-left: 11px; }
.grip { width: 4px; height: 14px; margin-left: 8px; border: 1px solid #74777b; border-width: 0 1px; }
.comments { position: absolute; left: 5px; bottom: 5px; }
.comments h2 { margin-left: 25px; }
.tree { display: flex; flex-direction: column; gap: 5px; padding-top: 6px; color: #44484c; font-size: 13px; }
.tree li { display: flex; align-items: center; gap: 10px; height: 25px; padding-left: 45px; }
.tree .root { gap: 10px; padding-left: 20px; }
.node { display: flex; align-items: center; height: 25px; gap: 11px; padding: 0 16px 0 3px; background: #c7cacf; }
.root .node { gap: 6px; padding: 0 10px 0 4px; }
.component { display: flex; align-items: center; height: 20px; gap: 18px; padding: 0 14px 0 4px; background: #7d8185; color: #d5d8dd; }
.label { padding-left: 7px; }
.expand { width: 13px; height: 18px; }
.eye { width: 20px; height: 16px; }
.folder { width: 21px; height: 17px; }
.gear { width: 20px; height: 20px; }

.navbar { position: absolute; left: 50%; bottom: 5px; width: 296px; height: 30px; display: flex; align-items: center; justify-content: space-between; padding: 0 7px 0 4px; transform: translateX(-50%); background: #c7cacf; }
.navbar button { gap: 3px; }
.navbar .wide { gap: 6px; }
.navbar .plain { padding: 0 3px; }

/* Timeline */
.timeline { display: flex; align-items: flex-start; height: 63px; padding: 0 18px 0 13px; border-top: 3px solid #a9acb0; background: #c7cacf; }
.playback { display: flex; gap: 15px; padding-top: 21px; fill: #3f4347; }
.features { display: flex; margin-left: 29px; padding-top: 16px; }
.features li { position: relative; width: 30px; height: 35px; border-bottom: 2px solid #a9acb0; }
.features li::before { content: ""; position: absolute; left: 11px; bottom: 0; width: 2px; height: 6px; background: #a9acb0; }
.features li:first-child { border-image: linear-gradient(to right, transparent 11px, #a9acb0 11px) 2; }
.features li:last-child { border-image: linear-gradient(to right, #a9acb0 13px, transparent 13px) 2; }
.features svg { width: 22px; height: 24px; }
.marker { margin: 10px 0 0 -13px; }
.settings { margin: 20px 0 0 auto; }

/* Export dialog */
.overlay { position: absolute; inset: 60px 0 auto; display: flex; justify-content: center; }
.dialog { width: 936px; border: 1px solid #dcdcdc; background: #fff; color: #767676; font-size: 15px; line-height: 20px; }
.dialog-head { display: flex; align-items: center; justify-content: space-between; height: 104px; padding: 10px 35px 0; border-bottom: 2px solid #dcdcdc; }
.dialog-head h2 { font-size: 30px; line-height: 36px; }
.fields { display: flex; flex-direction: column; gap: 13px; padding: 34px 35px 43px; }
.fields input { height: 36px; padding: 0 12px; border: 1px solid #cfcfcf; border-radius: 4px; background: #fff; font: inherit; }
.combo { position: relative; height: 37px; }
.combo select { width: 100%; height: 37px; padding: 2px 12px 0; appearance: none; border: 1px solid #cfcfcf; border-radius: 4px 4px 0 0; background: #fff; color: #111; font: inherit; }
.combo-arrow { position: absolute; top: 15px; right: 8px; width: 12px; height: 7px; }
.popup { position: absolute; top: 36px; left: 0; right: 0; height: 199px; display: flex; padding: 6px 0 3px 10px; border: 1px solid #c4c4c4; background: #f0f0f0; box-shadow: 3px 3px 3px -1px #777; }
.options { flex: 1; display: flex; flex-direction: column; background: #fff; color: #111; }
.options li { flex: 1; min-height: 0; padding-left: 4px; line-height: 18px; }
.options .current { background: #0078d7; color: #dceeff; outline: 1px dotted #d98a3d; outline-offset: -1px; }
.scroll { width: 11px; padding-top: 31px; background: #fafbfd; }
.scroll i { display: block; height: 100%; border-radius: 4px; background: #c1c1c1; }
.actions { display: flex; justify-content: flex-end; gap: 8px; padding-top: 184px; }
.actions button { height: 40px; justify-content: center; border-radius: 4px; }
.cancel { width: 91px; border: 1px solid #a9a9a9; background: #fafafa; }
.export { width: 85px; background: #a5dff4; color: #e9f8fe; }

/* Taskbar */
.taskbar { display: flex; height: 50px; background: #252e2e; color: #fff; }
.tray { flex: 1; display: flex; align-items: center; gap: 10px; margin-left: 5px; padding-left: 25px; border-left: 1px solid #5d6464; }
.clock { display: flex; flex-direction: column; align-items: center; width: 62px; font: 14px/22px "DejaVu Sans", sans-serif; }
.lang { margin-right: 2px; font: 14px/20px "Open Sans", "Noto Sans", sans-serif; }
.apps { display: flex; margin-right: 2px; }
.apps button { position: relative; width: 62px; height: 50px; justify-content: center; }
.apps svg { width: 30px; height: 30px; }
.apps .taskview { width: 22px; height: 24px; }
.run::after { content: ""; position: absolute; left: 6px; right: 6px; bottom: 0; height: 3px; background: #b1aca7; }
.two::after { border-left: 11px solid #8a8884; }
.focus { background: #515959; }
.focus::after { left: 0; right: 0; }
.tiny { fill: #e08a3a; font-size: 7px; font-weight: bold; }
.ai { width: 28px; height: 30px; border-radius: 4px; background: #330000; color: #ff9a00; font: bold 17px/28px "Open Sans", sans-serif; }
.search { display: flex; align-items: center; gap: 14px; width: 430px; padding-right: 14px; border: 1px solid #666; background: #333; }
.search input { flex: 1; min-width: 0; padding: 0; border: 0; background: none; color: #ddd; font: 18px/24px "DejaVu Sans", sans-serif; }
.search input::placeholder { color: #d5d5d5; opacity: 1; }
.start { width: 60px; justify-content: center; }
```
